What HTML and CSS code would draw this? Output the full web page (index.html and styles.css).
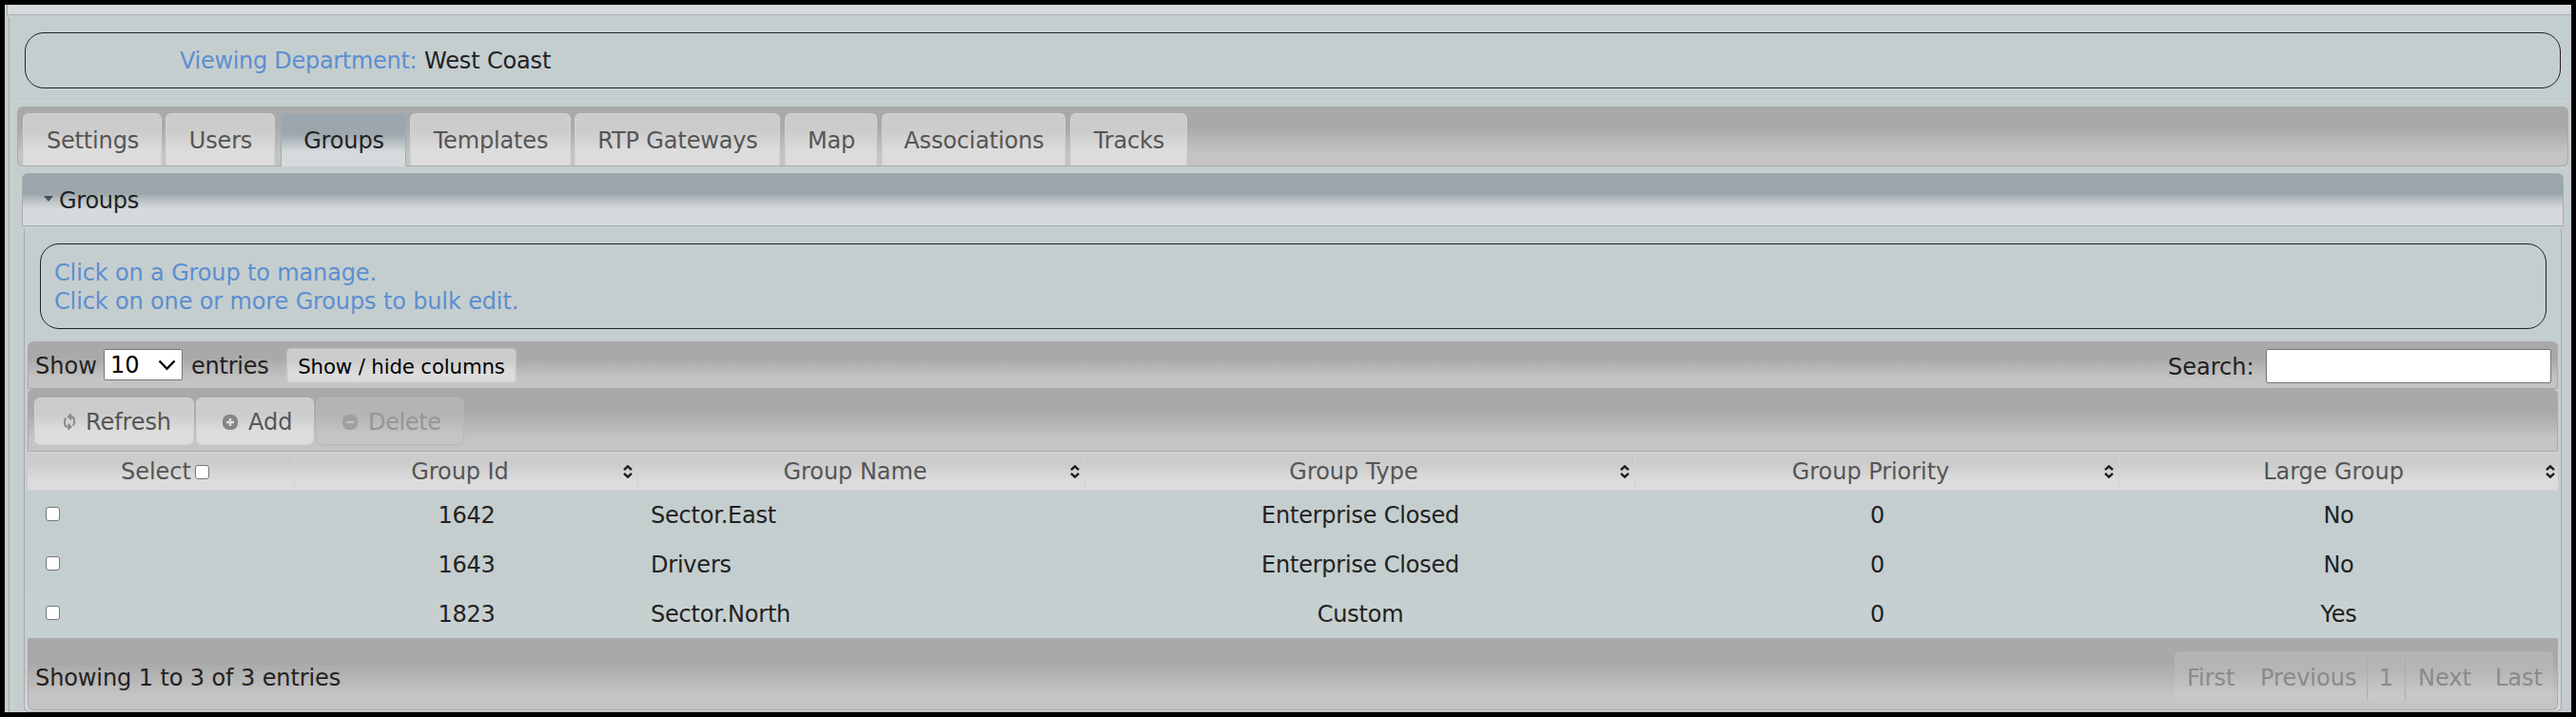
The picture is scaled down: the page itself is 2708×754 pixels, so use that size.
FILE: index.html
```html
<!DOCTYPE html>
<html lang="en">
<head>
<meta charset="utf-8">
<title>Groups</title>
<link rel="stylesheet" href="styles.css">
</head>
<body>
<svg class="defs" width="0" height="0">
  <symbol id="sort" viewBox="0 0 12 14"><path d="M2 5.2 6 1.4 10 5.2M2 8.8 6 12.6 10 8.8" fill="none" stroke="#1c1c1c" stroke-width="2.4"/></symbol>
</svg>
<div class="screen">
  <div class="topbar"></div>
  <div class="page">
    <div class="dept"><span class="blue">Viewing Department:</span><span class="dept-name">West Coast</span></div>
    <div class="tabs">
      <nav class="tab-row">
        <a class="tab t1"><span>Settings</span></a>
        <a class="tab t2"><span>Users</span></a>
        <a class="tab t3 active"><span>Groups</span></a>
        <a class="tab t4"><span>Templates</span></a>
        <a class="tab t5"><span>RTP Gateways</span></a>
        <a class="tab t6"><span>Map</span></a>
        <a class="tab t7"><span>Associations</span></a>
        <a class="tab t8"><span>Tracks</span></a>
      </nav>
      <div class="acc-head"><svg width="10" height="6" viewBox="0 0 10 6"><path d="M0 0H10L5 6Z" fill="#4b4f50"/></svg><span>Groups</span></div>
      <div class="acc-body">
        <div class="hint"><p class="h1">Click on a Group to manage.</p><p class="h2">Click on one or more Groups to bulk edit.</p></div>
        <div class="bar lengthbar">
          <span class="show">Show</span>
          <span class="select"><span>10</span><svg width="19" height="12" viewBox="0 0 19 12"><path d="M1.5 1.5 9.5 9.8 17.5 1.5" fill="none" stroke="#000" stroke-width="2.4"/></svg></span>
          <span class="entries">entries</span>
          <button class="colvis"><span>Show / hide columns</span></button>
          <span class="search">Search:</span>
          <input class="field" type="text" aria-label="Search">
        </div>
        <div class="bar buttonbar">
          <div class="btn refresh"><svg width="14" height="17" viewBox="0 0 14 17"><g fill="none" stroke="#8c8c8c" stroke-width="2"><path d="M9 14H6.2Q2 14 2 10.500V7.500Q2 5.500 3.500 4.500"/><path d="M5 3H7.800Q12 3 12 6.500V9.500Q12 11.500 10.500 12.500"/><path d="M9 .3 6 3 9 6.200M5.500 10.800 8.500 14 5.500 16.700"/></g></svg><span>Refresh</span></div>
          <div class="btn add"><svg width="16" height="18" viewBox="0 0 16 18"><rect y="1" width="16" height="16" rx="6.500" fill="#868686"/><path d="M8 5V13M4 9H12" stroke="#dedede" stroke-width="2.400"/></svg><span>Add</span></div>
          <div class="btn delete"><svg width="16" height="18" viewBox="0 0 16 18"><rect y="1" width="16" height="16" rx="6.500" fill="#9f9f9f"/><path d="M4 9H12" stroke="#bebebe" stroke-width="2.400"/></svg><span>Delete</span></div>
        </div>
        <div class="row head">
          <div class="sel"><span>Select</span><i class="check"></i></div>
          <div><span>Group Id</span><svg width="12" height="14"><use href="#sort"/></svg></div>
          <div><span>Group Name</span><svg width="12" height="14"><use href="#sort"/></svg></div>
          <div><span>Group Type</span><svg width="12" height="14"><use href="#sort"/></svg></div>
          <div><span>Group Priority</span><svg width="12" height="14"><use href="#sort"/></svg></div>
          <div class="last"><span>Large Group</span><svg width="12" height="14"><use href="#sort"/></svg></div>
        </div>
        <div class="row"><div class="pick"><i class="check"></i></div><div>1642</div><div class="name">Sector.East</div><div>Enterprise Closed</div><div>0</div><div>No</div></div>
        <div class="row"><div class="pick"><i class="check"></i></div><div>1643</div><div class="name">Drivers</div><div>Enterprise Closed</div><div>0</div><div>No</div></div>
        <div class="row alt"><div class="pick"><i class="check"></i></div><div>1823</div><div class="name">Sector.North</div><div>Custom</div><div>0</div><div>Yes</div></div>
        <div class="bar footer">
          <span class="info">Showing 1 to 3 of 3 entries</span>
          <div class="pager"><span class="p1">First</span><span class="p2">Previous</span><span class="p3">1</span><span class="p4">Next</span><span class="p5">Last</span></div>
        </div>
      </div>
    </div>
  </div>
</div>
</body>
</html>
```
FILE: styles.css
```css
* { box-sizing: border-box; }
body {
  margin: 0;
  background: #000;
  font: 24px/30px "DejaVu Sans", Verdana, sans-serif;
  color: #222;
  white-space: nowrap;
}
.defs { display: none; }
p { margin: 0; }
.screen {
  margin: 5px 0 0 5px;
  width: 2698px;
  height: 744px;
  overflow: hidden;
  background: #c5cecf;
}
.topbar {
  height: 11px;
  margin-left: 2px;
  background: #d5dadd;
  border-left: 1px solid #a9a9a9;
  border-bottom: 1px solid #a9adae;
}
.page {
  margin: 2px 0 0 4px;
  height: 731px;
  border-left: 1px solid #a9a9a9;
  padding: 16px 0 0 16px;
}
.dept {
  width: 2666px;
  height: 59px;
  border: 1px solid #222;
  border-radius: 20px;
  padding: 14px 0 0 162px;
  display: flex;
}
.blue, .hint { color: #5c8fd0; }
.blue { width: 257px; letter-spacing: -.3px; }
.dept-name { letter-spacing: -.15px; }
.tabs {
  margin: 13px 0 0 -13px;
  height: 660px;
  border: 1px solid #d0d3d4;
  border-right: 0;
  border-radius: 6px 0 0 0;
  padding: 5px 0 0 4px;
}
.tab-row {
  display: flex;
  width: 2682px;
  height: 63px;
  padding: 7px 0 0 5px;
  border: 1px solid #a9a9a9;
  border-top: 0;
  border-radius: 6px;
  background: linear-gradient(#a9a9a9 35%, #c4c4c4 80%);
}
.tab {
  height: 55px;
  border: 1px solid #d3d3d3;
  border-bottom: 0;
  border-radius: 6px 6px 0 0;
  background: linear-gradient(#ccc 35%, #dcdcdc 70%);
  color: #555;
  padding: 13px 0 0 1px;
  text-align: center;
  letter-spacing: -.15px;
}
.t1 { width: 146px; }
.t2 { width: 115px; margin-left: 4px; }
.t3 { width: 132px; margin-left: 6px; }
.t4 { width: 169px; margin-left: 4px; }
.t5 { width: 216px; margin-left: 4px; }
.t6 { width: 97px; margin-left: 5px; }
.t7 { width: 193px; margin-left: 5px; }
.t8 { width: 123px; margin-left: 5px; }
.tab.active {
  height: 56px;
  border-color: #a3abad;
  background: linear-gradient(#9ba7ac 38%, #d5dadd 72%);
  color: #222;
}
.acc-head {
  display: flex;
  align-items: center;
  gap: 6px;
  margin: 7px 0 0 5px;
  width: 2672px;
  height: 56px;
  padding: 1px 0 0 22px;
  letter-spacing: -.25px;
  border: 1px solid #a9a9a9;
  border-radius: 6px 6px 0 0;
  background: linear-gradient(#9ba7ac 38%, #bcc4c6 53%, #d5dadd 68%);
}
.acc-head svg { margin-bottom: 3px; }
.acc-body {
  margin: 3px 0 0 7px;
  width: 2668px;
  height: 508px;
  border: 1px solid #a9a9a9;
  border-top: 0;
  border-radius: 0 0 6px 6px;
  padding: 15px 3px 0;
  background: linear-gradient(#c5cecf 92%, #d2dadb);
}
.hint {
  width: 2635px;
  height: 90px;
  margin-left: 13px;
  border: 1px solid #222;
  border-radius: 20px;
  padding: 15px 0 0 14px;
  letter-spacing: -.14px;
}
.bar {
  display: flex;
  border: 1px solid #a9a9a9;
  background: linear-gradient(#a9a9a9 35%, #c4c4c4 80%);
}
.lengthbar {
  margin-top: 13px;
  height: 50px;
  padding: 7px 6px 0 7px;
  border-radius: 6px 6px 0 0;
}
.show { width: 72px; padding-top: 3px; }
.select {
  display: flex;
  align-items: center;
  justify-content: space-between;
  width: 83px;
  height: 33px;
  margin-right: 9px;
  padding: 1px 6px 0;
  background: #fff;
  border: 1px solid #767676;
  border-radius: 2px;
  color: #000;
}
.entries { width: 101px; padding-top: 3px; letter-spacing: -.25px; }
.colvis {
  width: 240px;
  height: 35px;
  padding: 2px 0 0;
  border: 1px solid #d3d3d3;
  border-radius: 3px;
  background: linear-gradient(#ccc 35%, #dcdcdc 70%);
  box-shadow: 0 0 3px #cfcfcf;
  font: 21.300px/26px "DejaVu Sans", Verdana, sans-serif;
  letter-spacing: -.15px;
  color: #000;
}
.search { margin-left: auto; width: 103px; padding-top: 4px; }
.field {
  width: 300px;
  height: 36px;
  padding: 0 4px;
  border: 1px solid #767676;
  border-radius: 2px;
  background: #fff;
}
.buttonbar {
  height: 66px;
  gap: 2px;
  padding: 8px 6px 0;
  border-radius: 6px 6px 0 0;
}
.btn {
  display: flex;
  align-items: center;
  height: 50px;
  padding-top: 1px;
  border: 1px solid #d3d3d3;
  border-radius: 6px;
  background: linear-gradient(#ccc 35%, #dcdcdc 70%);
  color: #555;
}
.refresh { width: 168px; padding-left: 29px; gap: 10px; letter-spacing: -.1px; }
.add { width: 124px; padding-left: 27px; gap: 11px; }
.delete {
  width: 156px;
  padding-left: 27px;
  gap: 11px;
  letter-spacing: -.35px;
  color: #969696;
  border-color: #b9b9b9;
  background: linear-gradient(#b4b4b4 35%, #c5c5c5 80%);
}
.row {
  display: grid;
  grid-template-columns: 281px 361px 470px 578px 509px 461px;
  height: 52px;
  line-height: 52px;
  text-align: center;
  letter-spacing: -.22px;
}
.row.alt { background: #c7d0d1; height: 51px; }
.row.head {
  height: 41px;
  line-height: 40px;
  border-top: 1px solid #d3d3d3;
  border-bottom: 1px solid #d3d3d3;
  background: linear-gradient(#ccc 30%, #dcdcdc 75%);
  color: #555;
  letter-spacing: -.05px;
}
.head > div {
  display: flex;
  align-items: center;
  border-right: 1px solid #d3d3d3;
  padding: 0 4px 0 3px;
}
.head > div > span { flex: 1; }
.head svg { display: block; }
.head > .sel { padding-left: 98px; gap: 4px; }
.head > .sel > span { flex: none; }
.head > .last { border: 0; padding-right: 2px; }
.check {
  display: block;
  width: 15px;
  height: 15px;
  background: #fff;
  border: 1px solid #767676;
  border-radius: 3px;
}
.pick { padding: 17px 0 0 19px; }
.name { text-align: left; padding-left: 13px; }
.footer {
  height: 76px;
  border-top: 0;
  border-radius: 0 0 6px 6px;
  padding: 14px 4px 0 7px;
}
.info { padding-top: 13px; letter-spacing: -.1px; }
.pager {
  display: flex;
  margin-left: auto;
  width: 398px;
  height: 54px;
  border-radius: 5px;
  background: linear-gradient(#b5b5b5 35%, #c7c7c7 80%);
  color: #8a8a8a;
  padding-top: 13px;
}
.p1 { width: 90px; padding-left: 13px; }
.p2 { width: 112px; }
.p3 {
  width: 41px;
  margin-top: -13px;
  padding-top: 13px;
  border: 1px solid #adadad;
  border-width: 0 1px;
  border-radius: 5px;
  text-align: center;
}
.p4 { width: 94px; padding-left: 13px; }
```
